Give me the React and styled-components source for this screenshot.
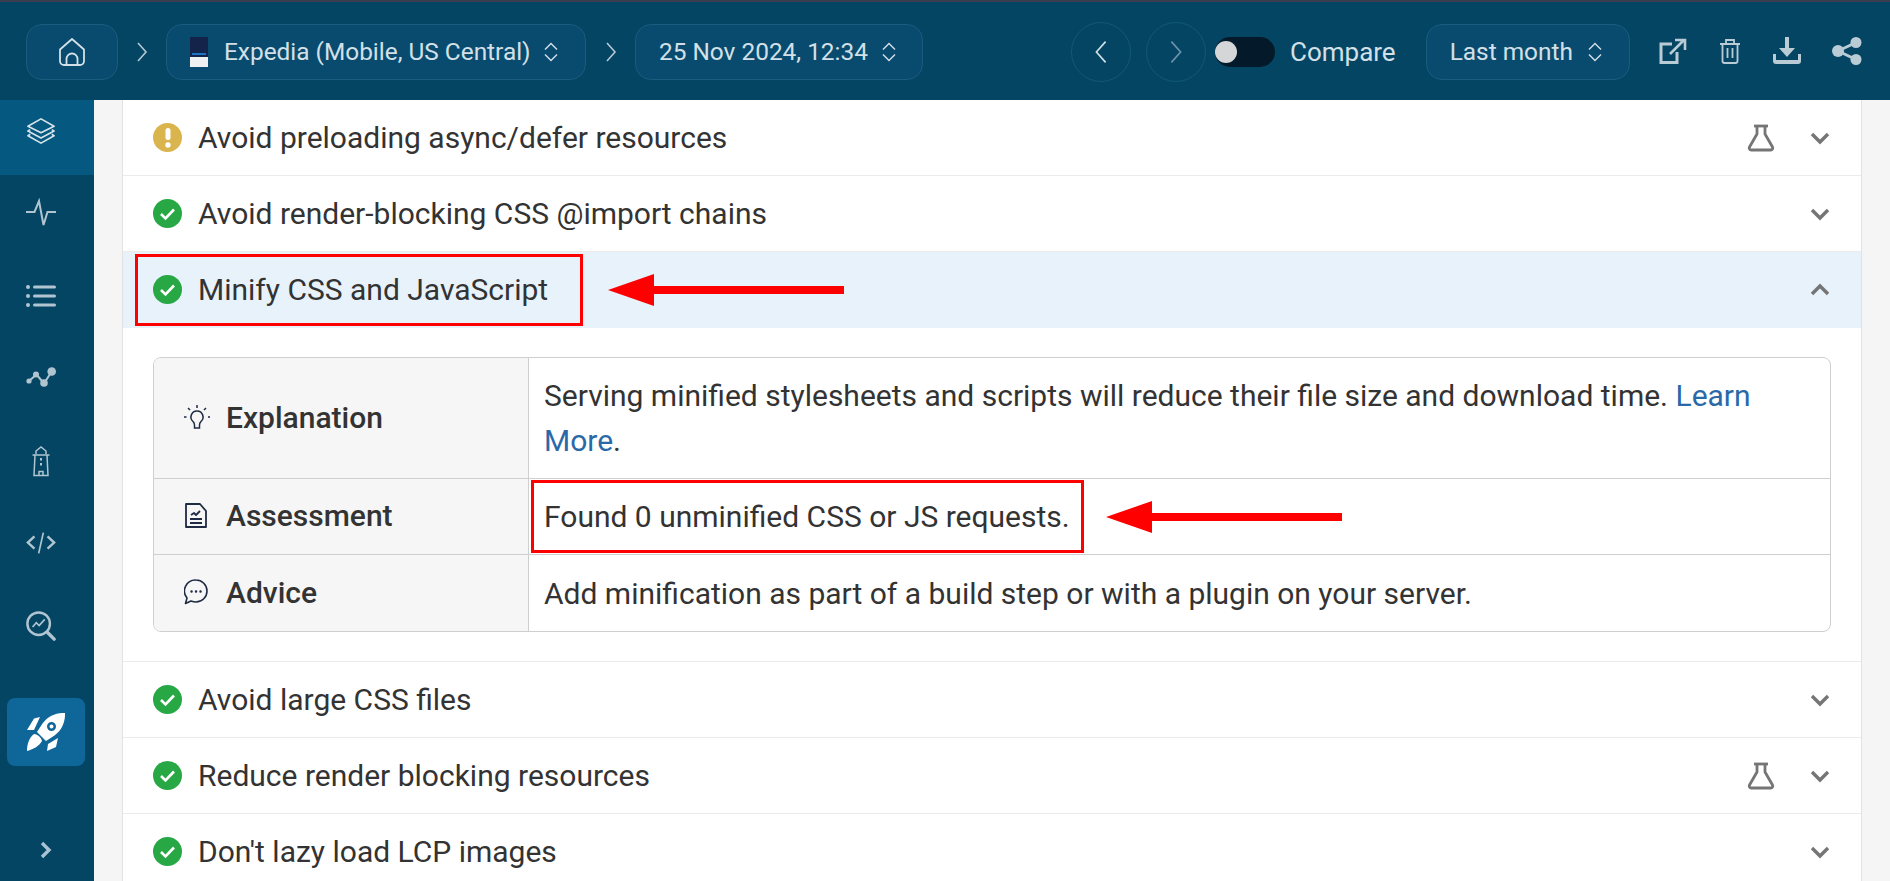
import React from "react";
import styled, { createGlobalStyle } from "styled-components";

const GlobalStyle = createGlobalStyle`
  html, body {
    margin: 0;
    height: 100%;
    overflow: hidden;
    background: #f5f5f5;
    font-family: Roboto, "Liberation Sans", sans-serif;
  }
  * { box-sizing: border-box; }
`;

const Page = styled.div`
  display: flex;
  flex-direction: column;
  height: 100vh;
  overflow: hidden;
`;

const TopBar = styled.header`
  flex: none;
  display: flex;
  align-items: center;
  height: 100px;
  padding: 0 28px 0 26px;
  background: #044564;
  border-top: 2px solid #3b3d50;
  color: #d3e0e7;
`;

const Crumb = styled.div`
  display: flex;
  align-items: center;
  justify-content: ${p => (p.$center ? "center" : "flex-start")};
  width: ${p => p.$width}px;
  height: 56px;
  padding-left: ${p => p.$pad || 0}px;
  background: #084b6f;
  border: 1px solid #1b5b7d;
  border-radius: 16px;
  font-size: 24.4px;
  white-space: nowrap;
  margin-top: 1px;
`;

const CrumbText = styled.span`
  margin-right: ${p => p.$gap || 15}px;
`;

const Thumb = styled.div`
  position: relative;
  width: 18px;
  height: 30px;
  margin-right: 16px;
  background: linear-gradient(#14234a 0 66%, #eef0f2 66% 100%);
`;

const ThumbBar = styled.div`
  position: absolute;
  left: 2px;
  right: 2px;
  top: 16px;
  height: 2px;
  background: #1a73c8;
`;

const Separator = styled.div`
  display: flex;
  justify-content: center;
  width: ${p => p.$width}px;
  margin-top: 1px;
  color: #b4c8d3;
`;

const Circle = styled.div`
  display: flex;
  align-items: center;
  justify-content: center;
  width: 60px;
  height: 60px;
  margin: 1px 0 0 ${p => p.$left}px;
  border: 1px solid #125877;
  border-radius: 50%;
`;

const Toggle = styled.div`
  width: 60px;
  height: 30px;
  margin: 1px 0 0 9px;
  padding: 4px 0;
  background: #041a2a;
  border-radius: 15px;
`;

const Knob = styled.div`
  width: 22px;
  height: 22px;
  background: #d4d6d8;
  border-radius: 50%;
`;

const CompareLabel = styled.span`
  margin: 1px 30px 0 15px;
  font-size: 26px;
`;

const ActionIcon = styled.div`
  display: flex;
  justify-content: center;
  width: ${p => p.$width}px;
  margin: 0 0 0 ${p => p.$left}px;
  color: #b9ccd6;
`;

const Body = styled.div`
  flex: 1;
  display: flex;
  min-height: 0;
`;

const Rail = styled.nav`
  flex: none;
  display: flex;
  flex-direction: column;
  width: 94px;
  background: #044564;
  color: #b0c5d0;
`;

const RailTop = styled.div`
  display: flex;
  justify-content: center;
  height: 75px;
  padding: 17px 12px 0 0;
  background: #05587f;
  color: #d6e3ea;
`;

const RailList = styled.div`
  display: flex;
  flex-direction: column;
  gap: 6.5px;
`;

const RailItem = styled.div`
  display: flex;
  align-items: center;
  justify-content: center;
  height: 76px;
  padding-right: 12px;
`;

const RocketBox = styled.div`
  display: flex;
  align-items: center;
  justify-content: center;
  width: 78px;
  height: 68px;
  margin: 34px 0 0 7px;
  background: #0e6798;
  border-radius: 8px;
  color: #fff;
`;

const RailToggle = styled.div`
  display: flex;
  justify-content: center;
  margin-top: auto;
  padding: 0 3px 22px 0;
  color: #a9c3d3;
`;

const Main = styled.main`
  flex: 1;
  padding: 0 28px 0 28px;
  min-width: 0;
`;

const Panel = styled.section`
  background: #fff;
  height: 100%;
  border-left: 1px solid #e2e2e2;
  border-right: 1px solid #e2e2e2;
`;

const AuditRow = styled.div`
  position: relative;
  display: flex;
  align-items: center;
  height: 76px;
  padding: 0 31px 0 30px;
  background: ${p => (p.$open ? "#e7f2fb" : "#fff")};
  border-bottom: 1px solid ${p => (p.$open ? "#e7f2fb" : "#ebebeb")};
  color: #333;
  font-size: 30px;
`;

const StatusDot = styled.span`
  flex: none;
  display: flex;
  align-items: center;
  justify-content: center;
  width: 29px;
  height: 29px;
  margin-right: 16px;
  background: ${p => (p.$warn ? "#dab44c" : "#28a745")};
  border-radius: 50%;
  color: #fff;
`;

const RowTitle = styled.span`
  flex: 1;
`;

const RowIcon = styled.span`
  display: flex;
  margin-right: 35px;
  color: #757575;
`;

const RowChevron = styled.span`
  display: flex;
  color: #757575;
`;

const Expanded = styled.div`
  padding: 29px 30px 29px 30px;
  border-bottom: 1px solid #ebebeb;
`;

const DetailTable = styled.div`
  display: grid;
  grid-template-columns: 375px 1fr;
  grid-template-rows: 121px 76px 76px;
  border: 1px solid #cfcfcf;
  border-radius: 8px;
  overflow: hidden;
`;

const LabelCell = styled.div`
  display: flex;
  align-items: center;
  padding: 0 0 2px 30px;
  background: #f6f6f6;
  border-right: 1px solid #cfcfcf;
  border-bottom: ${p => (p.$last ? "none" : "1px solid #cfcfcf")};
  color: #333;
  font-size: 30px;
  font-weight: 500;
`;

const LabelIcon = styled.span`
  display: flex;
  width: 42px;
  color: #1f2a44;
`;

const ValueCell = styled.div`
  position: relative;
  display: flex;
  align-items: center;
  padding: 0 16px 0 15px;
  border-bottom: ${p => (p.$last ? "none" : "1px solid #cfcfcf")};
  color: #333;
  font-size: 30px;
  line-height: 45px;
`;

const LearnLink = styled.a`
  color: #2a69a8;
  text-decoration: none;
`;

const RedBox = styled.div`
  position: absolute;
  left: ${p => p.$left}px;
  top: ${p => p.$top}px;
  width: ${p => p.$width}px;
  height: ${p => p.$height}px;
  border: 3px solid #f00;
  pointer-events: none;
`;

const ArrowMark = styled.svg`
  position: absolute;
  left: ${p => p.$left}px;
  top: ${p => p.$top}px;
`;

const Chevron = ({ dir = "right", size = 26, color = "currentColor", width = 1.6 }) => {
  const paths = {
    right: "M9 4l8 9-8 9",
    left: "M17 4l-8 9 8 9"
  };
  return (
    <svg width={size} height={size} viewBox="0 0 26 26" fill="none" stroke={color} strokeWidth={width}>
      <path d={paths[dir]} />
    </svg>
  );
};

const SortArrows = () => (
  <svg width="16" height="20" viewBox="0 0 16 20" fill="none" stroke="currentColor" strokeWidth="1.4">
    <path d="M2 7.5L8 1.5l6 6M2 12.5l6 6 6-6" />
  </svg>
);

const HomeIcon = () => (
  <svg width="30" height="30" viewBox="0 0 30 30" fill="none" stroke="currentColor" strokeWidth="1.8" strokeLinejoin="round">
    <path d="M3 12.5L15 2l12 10.5V24a4 4 0 0 1-4 4H7a4 4 0 0 1-4-4z" />
    <path d="M9.5 28v-6a5.5 5.5 0 0 1 11 0v6" />
  </svg>
);

const ExternalIcon = () => (
  <svg width="28" height="26" viewBox="0 0 28 26" fill="none" stroke="currentColor" strokeWidth="3">
    <path d="M13 6H2v18.500h16V14" />
    <path d="M11 16L25 2M16 2h10v10" strokeWidth="2.600" />
  </svg>
);

const TrashIcon = () => (
  <svg width="22" height="26" viewBox="0 0 22 26" fill="none" stroke="currentColor" strokeWidth="1.800">
    <path d="M1 6h20M7 6V2h8v4M3.500 6v17a2 2 0 0 0 2 2h11a2 2 0 0 0 2-2V6M8.500 10v10M13.500 10v10" />
  </svg>
);

const DownloadIcon = () => (
  <svg width="30" height="28" viewBox="0 0 30 28" fill="currentColor">
    <path d="M13 0h4v11h6l-8 9-8-9h6z" />
    <path d="M1 17h3v6h22v-6h3v7a3 3 0 0 1-3 3H4a3 3 0 0 1-3-3z" />
  </svg>
);

const ShareIcon = () => (
  <svg width="30" height="28" viewBox="0 0 30 28" fill="currentColor">
    <circle cx="24" cy="5.500" r="5.500" />
    <circle cx="6" cy="14" r="6" />
    <circle cx="24" cy="22.500" r="5.500" />
    <path d="M6 14L24 5.500M6 14l18 8.500" stroke="currentColor" strokeWidth="3" />
  </svg>
);

const LayersIcon = () => (
  <svg width="30" height="28" viewBox="0 0 32 30" fill="none" stroke="currentColor" strokeWidth="1.800" strokeLinejoin="round">
    <path d="M16 2L30 10 16 17 2 10z" />
    <path d="M4.500 13.500L2 15l14 7.500L30 15l-2.500-1.500" />
    <path d="M4.500 18.500L2 20l14 8 14-8-2.500-1.500" />
  </svg>
);

const PulseIcon = () => (
  <svg width="30" height="30" viewBox="0 0 30 30" fill="none" stroke="currentColor" strokeWidth="2">
    <path d="M0 14h8.500L13 3l4.500 24 4-13H30" />
  </svg>
);

const ListIcon = () => (
  <svg width="30" height="24" viewBox="0 0 30 24" fill="currentColor">
    <circle cx="2" cy="3" r="2" />
    <circle cx="2" cy="12" r="2" />
    <circle cx="2" cy="21" r="2" />
    <rect x="7" y="1.500" width="23" height="3" rx="1.500" />
    <rect x="7" y="10.500" width="23" height="3" rx="1.500" />
    <rect x="7" y="19.500" width="23" height="3" rx="1.500" />
  </svg>
);

const NodesIcon = () => (
  <svg width="30" height="22" viewBox="0 0 30 22" fill="currentColor">
    <path d="M3 14l7.500-6.500 7.500 9L26 4" fill="none" stroke="currentColor" strokeWidth="2" />
    <circle cx="3" cy="14" r="2.600" />
    <circle cx="10" cy="7.500" r="3" />
    <circle cx="18" cy="16" r="3.800" />
    <circle cx="25.700" cy="4.500" r="4.300" />
  </svg>
);

const LighthouseIcon = () => (
  <svg width="18" height="32" viewBox="0 0 18 32" fill="none" stroke="currentColor" strokeWidth="1.500">
    <path d="M4 9V6l5-4 5 4v3M0.500 10h17M3 10L2 30.500h14L15 10M7 30.500v-4h4v4" />
    <path d="M9 13v2.500M9 18v2.500" strokeWidth="2" />
  </svg>
);

const CodeIcon = () => (
  <svg width="30" height="24" viewBox="0 0 32 24" fill="none" stroke="currentColor" strokeWidth="2.600">
    <path d="M9 5L2 11.500 9 18M23 5l7 6.500L23 18" />
    <path d="M18.500 1L13.500 23" strokeWidth="1.800" />
  </svg>
);

const SearchChartIcon = () => (
  <svg width="30" height="30" viewBox="0 0 32 32" fill="none" stroke="currentColor" strokeWidth="2.600">
    <circle cx="13.500" cy="13.500" r="12" />
    <path d="M23 23l7 7" strokeWidth="3.600" strokeLinecap="round" />
    <path d="M7 17l4-4.500 3 3 6-6.500" strokeWidth="1.800" />
  </svg>
);

const RocketIcon = () => (
  <svg width="38" height="38" viewBox="0 0 38 38" fill="currentColor">
    <path fillRule="evenodd" d="M38 0c.4 8.500-3 17-10.500 22.500L19 28 10 19l5.500-8.500C21 3 29.500-.4 38 0zM24.500 9a4.500 4.500 0 1 0 0 9 4.500 4.500 0 0 0 0-9zm0 2.500a2 2 0 1 1 0 4 2 2 0 0 1 0-4z" />
    <path d="M13 4L7 5.500 0 17l7 0zM31 25l-10 6-1 7 9-4z" />
    <path d="M7 21c3 0 7 3 8 7-3 5-8 8-15 10 0-7 2-13 7-17z" />
  </svg>
);

const RailChevron = () => (
  <svg width="14" height="18" viewBox="0 0 14 18" fill="none" stroke="currentColor" strokeWidth="3.400">
    <path d="M3 2l7 7-7 7" />
  </svg>
);

const CheckIcon = () => (
  <svg width="17" height="14" viewBox="0 0 17 14" fill="none" stroke="currentColor" strokeWidth="2.600">
    <path d="M2 7l4.500 4.500L15 2.500" />
  </svg>
);

const WarnIcon = () => (
  <svg width="6" height="20" viewBox="0 0 6 20" fill="currentColor">
    <rect x="0.500" y="0" width="5" height="12" rx="2.500" />
    <circle cx="3" cy="17" r="2.700" />
  </svg>
);

const FlaskIcon = () => (
  <svg width="28" height="28" viewBox="0 0 28 28" fill="none" stroke="currentColor" strokeWidth="2.800" strokeLinejoin="round">
    <path d="M7 2h14" />
    <path d="M10 2v8L2.500 23a2 2 0 0 0 1.800 3h19.400a2 2 0 0 0 1.800-3L18 10V2" />
  </svg>
);

const RowArrow = ({ up }) => (
  <svg width="20" height="20" viewBox="0 0 20 20" fill="none" stroke="currentColor" strokeWidth="3.400">
    <path d={up ? "M2 14l8-8 8 8" : "M2 6l8 8 8-8"} />
  </svg>
);

const BulbIcon = () => (
  <svg width="26" height="26" viewBox="0 0 26 26" fill="none" stroke="currentColor" strokeWidth="1.500">
    <path d="M13 7a6 6 0 0 0-4 10.500c1 1 1.500 2 1.500 3.500V24h5v-3c0-1.500.5-2.500 1.500-3.500A6 6 0 0 0 13 7z" />
    <path d="M13 1v3M4 4l2 2M22 4l-2 2M0 13h2.500M24 13h2" />
  </svg>
);

const ReportIcon = () => (
  <svg width="24" height="26" viewBox="0 0 24 26" fill="none" stroke="currentColor" strokeWidth="1.800" strokeLinejoin="round">
    <path d="M2 1h14l6 7v16H2z" />
    <path d="M7 12l3-2 2 2 4-4M6 16h12M6 20h12" />
  </svg>
);

const ChatIcon = () => (
  <svg width="24" height="26" viewBox="0 0 24 26" fill="none" stroke="currentColor" strokeWidth="1.600" strokeLinejoin="round">
    <path d="M12 1a11 11 0 0 1 0 22c-2 0-3.500-.5-5-1l-5.500 2.500L3 19A11 11 0 0 1 12 1z" />
    <path d="M7.500 12.500h.1M12 12.500h.1M16.500 12.500h.1" strokeWidth="2.400" strokeLinecap="round" />
  </svg>
);

const RedArrow = ({ left, top, width }) => (
  <ArrowMark $left={left} $top={top} width={width} height="32" viewBox={`0 0 ${width} 32`}>
    <path d={`M0 16L46 0v12h${width - 46}v8H46v12z`} fill="#f00" />
  </ArrowMark>
);

const Audit = ({ title, warn, flask }) => (
  <AuditRow>
    <StatusDot $warn={warn}>{warn ? <WarnIcon /> : <CheckIcon />}</StatusDot>
    <RowTitle>{title}</RowTitle>
    {flask && (
      <RowIcon>
        <FlaskIcon />
      </RowIcon>
    )}
    <RowChevron>
      <RowArrow />
    </RowChevron>
  </AuditRow>
);

const App = () => {
  return (
    <Page>
      <GlobalStyle />
      <TopBar>
        <Crumb $width={92} $center>
          <HomeIcon />
        </Crumb>
        <Separator $width={48}>
          <Chevron />
        </Separator>
        <Crumb $width={420} $pad={23}>
          <Thumb>
            <ThumbBar />
          </Thumb>
          <CrumbText $gap={12}>Expedia (Mobile, US Central)</CrumbText>
          <SortArrows />
        </Crumb>
        <Separator $width={49}>
          <Chevron />
        </Separator>
        <Crumb $width={288} $pad={23}>
          <CrumbText $gap={13}>25 Nov 2024, 12:34</CrumbText>
          <SortArrows />
        </Crumb>
        <Circle $left={148}>
          <Chevron dir="left" size={30} width={1.4} />
        </Circle>
        <Circle $left={15}>
          <Chevron size={30} width={1.4} color="#6f94a8" />
        </Circle>
        <Toggle>
          <Knob />
        </Toggle>
        <CompareLabel>Compare</CompareLabel>
        <Crumb $width={204} $pad={23}>
          <CrumbText $gap={14}>Last month</CrumbText>
          <SortArrows />
        </Crumb>
        <ActionIcon $width={28} $left={29}>
          <ExternalIcon />
        </ActionIcon>
        <ActionIcon $width={22} $left={32}>
          <TrashIcon />
        </ActionIcon>
        <ActionIcon $width={30} $left={31}>
          <DownloadIcon />
        </ActionIcon>
        <ActionIcon $width={30} $left={30}>
          <ShareIcon />
        </ActionIcon>
      </TopBar>
      <Body>
        <Rail>
          <RailTop>
            <LayersIcon />
          </RailTop>
          <RailList>
            <RailItem>
              <PulseIcon />
            </RailItem>
            <RailItem>
              <ListIcon />
            </RailItem>
            <RailItem>
              <NodesIcon />
            </RailItem>
            <RailItem>
              <LighthouseIcon />
            </RailItem>
            <RailItem>
              <CodeIcon />
            </RailItem>
            <RailItem>
              <SearchChartIcon />
            </RailItem>
          </RailList>
          <RocketBox>
            <RocketIcon />
          </RocketBox>
          <RailToggle>
            <RailChevron />
          </RailToggle>
        </Rail>
        <Main>
          <Panel>
            <Audit warn flask title="Avoid preloading async/defer resources" />
            <Audit title="Avoid render-blocking CSS @import chains" />
            <AuditRow $open>
              <StatusDot>
                <CheckIcon />
              </StatusDot>
              <RowTitle>Minify CSS and JavaScript</RowTitle>
              <RowChevron>
                <RowArrow up />
              </RowChevron>
              <RedBox $left={12} $top={2} $width={448} $height={72} />
              <RedArrow left={485} top={22} width={236} />
            </AuditRow>
            <Expanded>
              <DetailTable>
                <LabelCell>
                  <LabelIcon>
                    <BulbIcon />
                  </LabelIcon>
                  Explanation
                </LabelCell>
                <ValueCell>
                  <span>
                    Serving minified stylesheets and scripts will reduce their file size and download time.{" "}
                    <LearnLink>Learn More</LearnLink>.
                  </span>
                </ValueCell>
                <LabelCell>
                  <LabelIcon>
                    <ReportIcon />
                  </LabelIcon>
                  Assessment
                </LabelCell>
                <ValueCell>
                  Found 0 unminified CSS or JS requests.
                  <RedBox $left={2} $top={1} $width={553} $height={73} />
                  <RedArrow left={577} top={22} width={236} />
                </ValueCell>
                <LabelCell $last>
                  <LabelIcon>
                    <ChatIcon />
                  </LabelIcon>
                  Advice
                </LabelCell>
                <ValueCell $last>Add minification as part of a build step or with a plugin on your server.</ValueCell>
              </DetailTable>
            </Expanded>
            <Audit title="Avoid large CSS files" />
            <Audit flask title="Reduce render blocking resources" />
            <Audit title="Don't lazy load LCP images" />
          </Panel>
        </Main>
      </Body>
    </Page>
  );
};

export default App;
